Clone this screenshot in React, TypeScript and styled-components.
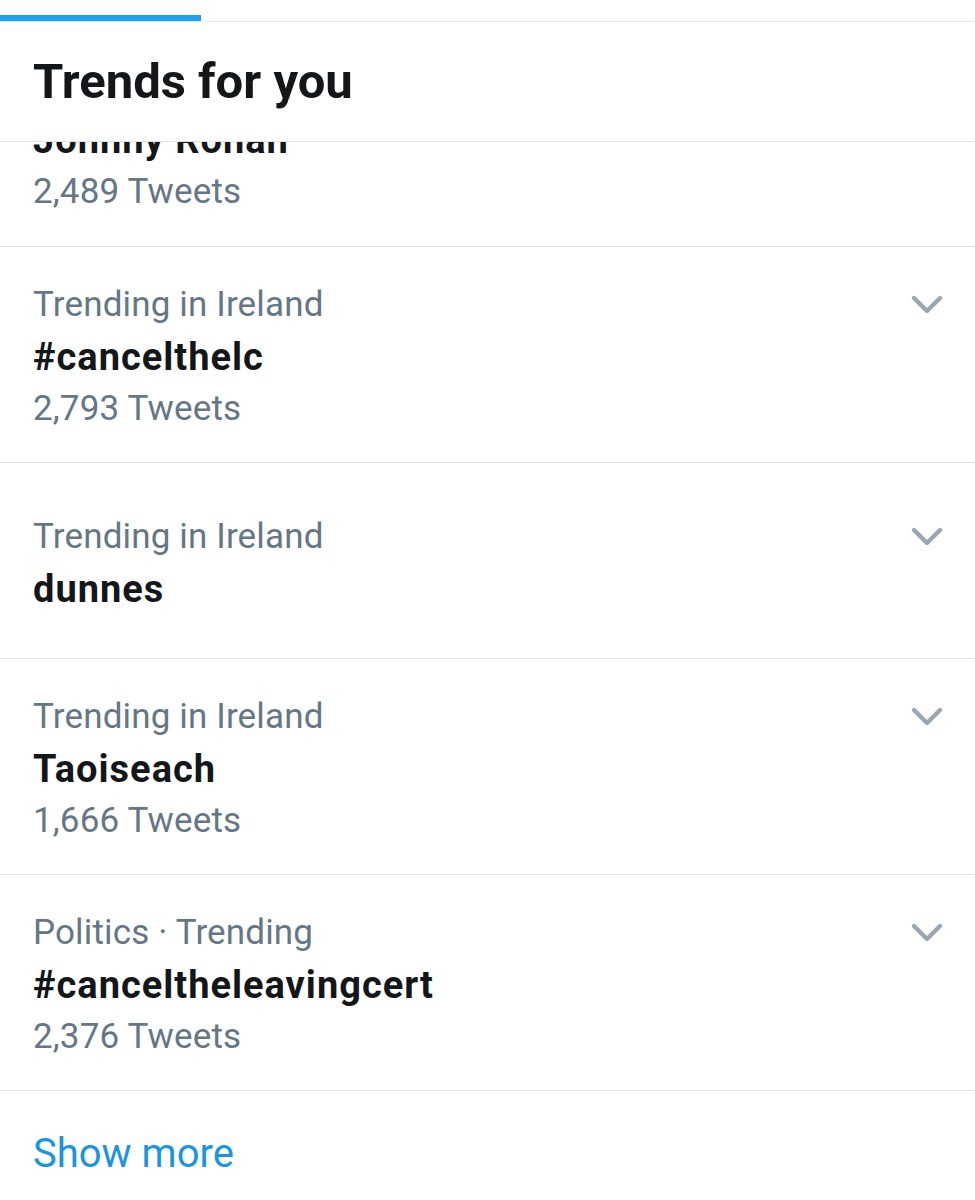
import * as React from 'react';
import styled, { createGlobalStyle } from 'styled-components';

interface Trend {
    context: string;
    name: string;
    tweets?: string;
}

const trends: Trend[] = [
    { context: 'Trending in Ireland', name: '#cancelthelc', tweets: '2,793 Tweets' },
    { context: 'Trending in Ireland', name: 'dunnes' },
    { context: 'Trending in Ireland', name: 'Taoiseach', tweets: '1,666 Tweets' },
    { context: 'Politics · Trending', name: '#canceltheleavingcert', tweets: '2,376 Tweets' },
];

const Chevron = () => (
    <svg width="32" height="20" viewBox="0 0 32 20" fill="none">
        <path d="M3 3 L16 16 L29 3" stroke="#9ba7b2" strokeWidth="4.4" strokeLinecap="round" strokeLinejoin="round" />
    </svg>
);

export default function App() {
    return <>
        <GlobalStyle />
        <Page>
            <TabStrip>
                <ActiveTab />
            </TabStrip>
            <Header>
                <HeaderTitle>Trends for you</HeaderTitle>
            </Header>
            {/* list is scrolled: first item slides under the header */}
            <ClippedRow>
                <Name>Johnny Ronan</Name>
                <Meta>2,489 Tweets</Meta>
            </ClippedRow>
            {trends.map(t => (
                <Row key={t.name}>
                    <ContextLine>
                        <Meta>{t.context}</Meta>
                        <Chevron />
                    </ContextLine>
                    <Name>{t.name}</Name>
                    {t.tweets && <Meta>{t.tweets}</Meta>}
                </Row>
            ))}
            <ShowMore>Show more</ShowMore>
        </Page>
    </>
}

const GlobalStyle = createGlobalStyle`
body {
    margin: 0;
    background: #ffffff;
    font-family: Roboto, "Liberation Sans", sans-serif;
}
`

const Page = styled.div`
width: 975px;
height: 1200px;
overflow: hidden;
background: #fff;
`

const TabStrip = styled.div`
padding-top: 15px;
border-bottom: 1px solid #e3e6e8;
`

const ActiveTab = styled.div`
width: 201px;
height: 6px;
background: #1da1f2;
`

const Header = styled.div`
height: 119px;
display: flex;
align-items: center;
padding: 0 33px;
border-bottom: 1px solid #dde3e7;
`

const HeaderTitle = styled.h2`
margin: 0;
font-size: 49px;
font-weight: 700;
color: #14171a;
`

const Meta = styled.div`
font-size: 35px;
line-height: 52px;
letter-spacing: 0.15px;
color: #657786;
`

const Name = styled.div`
font-size: 38px;
line-height: 52px;
font-weight: 700;
letter-spacing: 1px;
color: #14171a;
`

const ClippedRow = styled.div`
height: 76px;
overflow: hidden;
display: flex;
flex-direction: column;
justify-content: flex-end;
padding: 0 33px 28px;
border-bottom: 1px solid #dde3e7;
`

const Row = styled.div`
min-height: 136px;
display: flex;
flex-direction: column;
justify-content: center;
padding: 32px 32px 27px 33px;
border-bottom: 1px solid #dde3e7;
`

const ContextLine = styled.div`
display: flex;
align-items: center;
justify-content: space-between;
`

const ShowMore = styled.div`
padding: 37px 33px;
font-size: 40px;
line-height: 52px;
color: #1b95e0;
`
